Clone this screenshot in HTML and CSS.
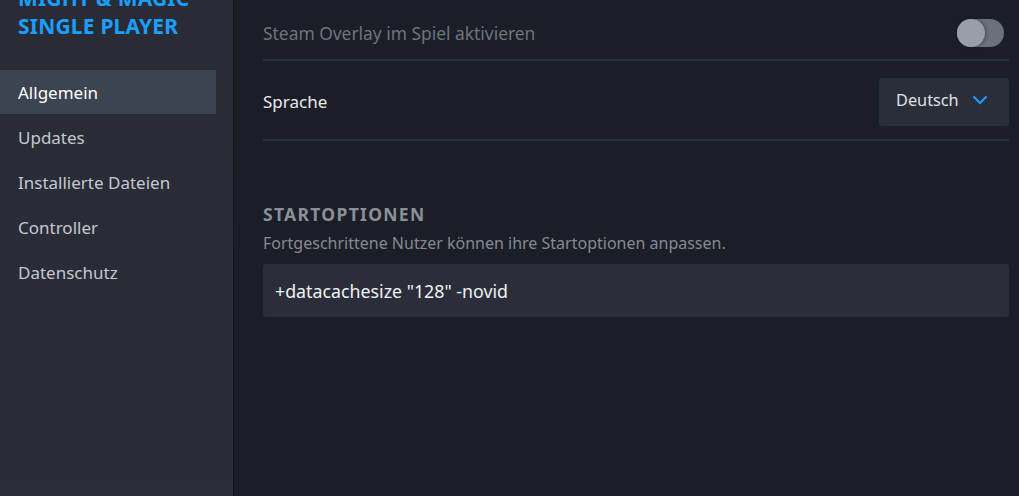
FILE: index.html
```html
<!DOCTYPE html>
<html lang="de">
<head>
<meta charset="utf-8">
<link rel="stylesheet" href="styles.css">
</head>
<body>
<div class="app">
  <aside class="sidebar">
    <div class="game-title">MIGHT &amp; MAGIC<br>SINGLE PLAYER</div>
    <nav class="nav">
      <div class="nav-item active">Allgemein</div>
      <div class="nav-item">Updates</div>
      <div class="nav-item">Installierte Dateien</div>
      <div class="nav-item">Controller</div>
      <div class="nav-item">Datenschutz</div>
    </nav>
  </aside>
  <main class="content">
    <div class="row row-overlay">
      <span class="label dim">Steam Overlay im Spiel aktivieren</span>
      <span class="toggle"><span class="knob"></span></span>
    </div>
    <div class="row row-lang">
      <span class="label lang-label">Sprache</span>
      <div class="dropdown">
        <span>Deutsch</span>
        <svg class="chev" width="16" height="10" viewBox="0 0 16 10"><path d="M1.5 1.5 L8 8 L14.5 1.5" fill="none" stroke="#1a9fff" stroke-width="2.2"/></svg>
      </div>
    </div>
    <section class="launch">
      <h2 class="section-title">STARTOPTIONEN</h2>
      <p class="section-desc">Fortgeschrittene Nutzer können ihre Startoptionen anpassen.</p>
      <div class="input">+datacachesize "128" -novid</div>
    </section>
  </main>
</div>
</body>
</html>
```

FILE: styles.css
```css
html, body {
  margin: 0;
  padding: 0;
  height: 100%;
  background: #1b1e27;
  font-family: "Noto Sans", "Open Sans", sans-serif;
  overflow: hidden;
}
.app {
  display: flex;
  height: 496px;
}
.sidebar {
  width: 233px;
  background: linear-gradient(#292c34, #2a2d39);
  border-right: 1px solid #14161c;
  flex-shrink: 0;
}
.game-title {
  color: #1a9fff;
  font-weight: 700;
  font-size: 21px;
  line-height: 28px;
  padding-left: 18px;
  margin-top: -16px;
  letter-spacing: 0.2px;
}
.nav {
  margin-top: 30px;
  width: 216px;
}
.nav-item {
  height: 45px;
  display: flex;
  align-items: center;
  padding-left: 18px;
  color: #c4c8cf;
  font-size: 17px;
}
.nav-item.active {
  background: #3d4451;
  color: #ffffff;
  height: 44px;
  margin-bottom: 1px;
}
.content {
  flex: 1;
  padding: 0 10px 0 29px;
}
.row {
  display: flex;
  align-items: center;
  justify-content: space-between;
  border-bottom: 2px solid #2b2f3a;
}
.row-overlay {
  height: 59px;
}
.row-overlay .label {
  margin-top: 7px;
  font-size: 17.4px;
}
.toggle {
  width: 47px;
  height: 28px;
  border-radius: 14px;
  background: #6b7079;
  display: flex;
  align-items: center;
  margin-top: 7px;
  margin-right: 5px;
}
.knob {
  width: 28px;
  height: 28px;
  border-radius: 50%;
  background: #9a9ea7;
  box-shadow: 2px 0 3px rgba(0,0,0,0.25);
}
.label {
  font-size: 17px;
  color: #e8eaee;
}
.label.dim {
  color: #6f747c;
}
.lang-label {
  margin-top: 3px;
}
.row-lang {
  height: 78px;
}
.dropdown {
  width: 130px;
  height: 48px;
  box-sizing: border-box;
  background: #2a2e38;
  border-radius: 3px;
  display: flex;
  align-items: center;
  padding-left: 17px;
  gap: 13px;
  color: #dfe2e7;
  font-size: 16.3px;
  margin-top: 3px;
  padding-bottom: 4px;
}
.chev {
  margin-top: 1px;
}
.launch {
  padding-top: 61px;
}
.section-title {
  margin: 0;
  font-size: 17.5px;
  font-weight: 700;
  color: #8b9098;
  letter-spacing: 1.3px;
  line-height: 24px;
}
.section-desc {
  margin: 6px 0 0;
  font-size: 16px;
  color: #858a92;
  line-height: 22px;
}
.input {
  margin-top: 10px;
  height: 53px;
  box-sizing: border-box;
  background: #2b2e3a;
  border-radius: 3px;
  display: flex;
  align-items: center;
  padding-left: 12px;
  color: #f0f2f5;
  font-size: 17.8px;
}
```
